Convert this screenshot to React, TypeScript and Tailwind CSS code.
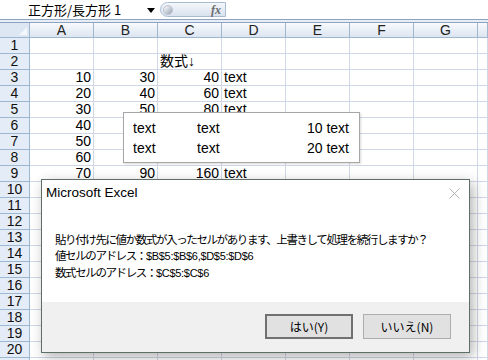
import React from 'react';

const cols = ['A', 'B', 'C', 'D', 'E', 'F', 'G', ''];

// cell values by row number: [A, B, C, D]
const data: Record<number, (string | number)[]> = {
  2: ['', '', '数式↓', ''],
  3: [10, 30, 40, 'text'],
  4: [20, 40, 60, 'text'],
  5: [30, 50, 80, 'text'],
  6: [40, '', '', ''],
  7: [50, '', '', ''],
  8: [60, '', '', ''],
  9: [70, 90, 160, 'text'],
};

const font = "font-['Liberation_Sans','Noto_Sans_CJK_JP',sans-serif]";
const jp = "font-['Noto_Sans_CJK_JP','Liberation_Sans',sans-serif]";

function Cell({ value }: { value: string | number | undefined }) {
  const isNum = typeof value === 'number';
  return (
    <div
      className={`border-r border-b border-[#d0d7e5] h-[16px] leading-[15px] text-[14px] text-black overflow-visible whitespace-nowrap ${
        isNum ? 'text-right pr-[2px]' : 'text-left pl-[2px]'
      }`}
    >
      {value === '' || value === undefined ? '' : value}
    </div>
  );
}

// Japanese part squeezed like Meiryo UI, Latin part kept in a plain face
function Jp({ children }: { children: React.ReactNode }) {
  return <span className={`${jp} text-[11.5px] tracking-[-1.4px]`}>{children}</span>;
}
function Lat({ children }: { children: React.ReactNode }) {
  return <span className="font-['Liberation_Sans',sans-serif] text-[11px] tracking-[-0.3px]">{children}</span>;
}

export default function App() {
  const rows = Array.from({ length: 20 }, (_, i) => i + 1);

  return (
    <div className={`relative w-[488px] h-[360px] overflow-hidden bg-white ${font}`}>
      {/* Formula bar */}
      <div className="flex h-[19px] items-center bg-white">
        <div className="w-[158px] h-full flex items-center relative">
          <span className={`pl-[28px] text-[13px] leading-none text-black ${jp}`}>正方形/長方形 1</span>
          <svg className="absolute left-[147px] top-[8px]" width="8" height="5" viewBox="0 0 8 5">
            <path d="M0 0 H8 L4 5 Z" fill="#000" />
          </svg>
        </div>
        <div className="w-[66px] h-[15px] ml-[2px] flex items-center justify-between rounded-l-full border border-[#a9bbd3] bg-gradient-to-b from-[#f4f7fb] to-[#d9e2ee]">
          <div className="ml-[2px] w-[10px] h-[10px] rounded-full bg-gradient-to-br from-white to-[#9aa4b2] border border-[#b8c2cf]" />
          <span className="mr-[4px] text-[12px] italic font-bold text-[#6b6b6b] font-['Liberation_Serif',serif] leading-none">
            fx
          </span>
        </div>
        <div className="flex-1 h-full bg-white" />
      </div>
      <div className="h-[4px] border-y border-[#8ea3c0] bg-[#e8eef6]" />

      {/* Column headers */}
      <div className="grid grid-cols-[30px_repeat(7,64px)_1fr] h-[15px]">
        <div className="relative bg-[#dde7f3] border-r border-b border-[#9eb6ce]">
          <svg className="absolute right-[2px] bottom-[2px]" width="8" height="8" viewBox="0 0 8 8">
            <path d="M8 0 V8 H0 Z" fill="#f3f6fa" />
          </svg>
        </div>
        {cols.map((c, i) => (
          <div
            key={i}
            className="bg-gradient-to-b from-[#f8fafd] to-[#dce5f0] border-r border-b border-[#9eb6ce] text-center text-[14px] leading-[14px] text-[#222]"
          >
            {c}
          </div>
        ))}
      </div>

      {/* Rows */}
      {rows.map((r) => {
        const vals = data[r] || [];
        return (
          <div key={r} className="grid grid-cols-[30px_repeat(7,64px)_1fr] h-[16px]">
            <div className="bg-[#e4ecf7] border-r border-b border-[#9eb6ce] text-center text-[14px] leading-[15px] text-[#111]">
              {r}
            </div>
            {cols.map((_, i) => (
              <Cell key={i} value={vals[i]} />
            ))}
          </div>
        );
      })}
      {/* top sliver of row 21 */}
      <div className="grid grid-cols-[30px_repeat(7,64px)_1fr] h-[2px]">
        <div className="bg-[#e4ecf7] border-r border-[#9eb6ce]" />
        {cols.map((_, i) => (
          <div key={i} className="border-r border-[#d0d7e5]" />
        ))}
      </div>

      {/* Floating shape */}
      <div className="absolute left-[123px] top-[112px] w-[237px] h-[51px] bg-white border border-[#a6a6a6] shadow-[1px_1px_2px_rgba(0,0,0,0.15)] text-[14px] text-black">
        <div className="flex h-[20px] mt-[5px] items-center">
          <span className="w-[64px] pl-[9px]">text</span>
          <span className="w-[64px] pl-[9px]">text</span>
          <span className="flex-1 text-right pr-[10px]">10 text</span>
        </div>
        <div className="flex h-[20px] items-center">
          <span className="w-[64px] pl-[9px]">text</span>
          <span className="w-[64px] pl-[9px]">text</span>
          <span className="flex-1 text-right pr-[10px]">20 text</span>
        </div>
      </div>

      {/* Dialog */}
      <div className="absolute left-[41px] top-[179px] w-[429px] h-[174px] flex flex-col bg-white border border-[#5f6f68] shadow-[3px_4px_12px_rgba(0,0,0,0.3)]">
        <div className="flex items-center justify-between h-[26px] pl-[4px] pr-[9px]">
          <span className="text-[13.5px] text-black font-['Liberation_Sans',sans-serif] pt-[1px]">Microsoft Excel</span>
          <svg width="11" height="11" viewBox="0 0 11 11">
            <path d="M0.5 0.5 L10.5 10.5 M10.5 0.5 L0.5 10.5" stroke="#b5b5b5" strokeWidth="1" />
          </svg>
        </div>
        <div className="flex-1 pl-[13px] pt-[25px] leading-[16px] text-black whitespace-nowrap">
          <p>
            <Jp>貼り付け先に値か数式が入ったセルがあります、上書きして処理を続行しますか？</Jp>
          </p>
          <p>
            <Jp>値セルのアドレス：</Jp>
            <Lat>$B$5:$B$6,$D$5:$D$6</Lat>
          </p>
          <p>
            <Jp>数式セルのアドレス：</Jp>
            <Lat>$C$5:$C$6</Lat>
          </p>
        </div>
        <div className="h-[50px] bg-[#f0f0f0] flex items-start justify-end gap-[10px] pr-[18px] pt-[12px]">
          <button
            className={`w-[88px] h-[25px] bg-[#e1e1e1] border-2 border-[#707070] text-[12px] text-black ${jp}`}
          >
            はい(Y)
          </button>
          <button
            className={`w-[88px] h-[25px] bg-[#e1e1e1] border border-[#adadad] text-[12px] text-black ${jp}`}
          >
            いいえ(N)
          </button>
        </div>
      </div>
    </div>
  );
}
